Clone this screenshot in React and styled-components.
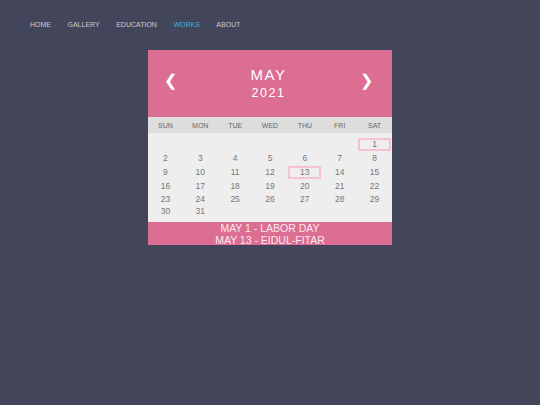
import styled, { createGlobalStyle } from 'styled-components';

const GlobalStyle = createGlobalStyle`
  * { box-sizing: border-box; }
  body {
    margin: 0;
    background: #43465a;
    font-family: "Liberation Sans", Arial, sans-serif;
  }
`;

const navItems = ['HOME', 'GALLERY', 'EDUCATION', 'WORKS', 'ABOUT'];
const weekdays = ['SUN', 'MON', 'TUE', 'WED', 'THU', 'FRI', 'SAT'];
const highlighted = [1, 13];

const days = [
  ...Array(6).fill(null),
  ...Array.from({ length: 31 }, (_, i) => i + 1),
];

function App() {
  return (
    <Page>
      <GlobalStyle />
      <Nav>
        {navItems.map((item) => (
          <NavLink key={item} $active={item === 'WORKS'}>{item}</NavLink>
        ))}
      </Nav>
      <Calendar>
        <Header>
          <Arrow>&#10094;</Arrow>
          <MonthYear>
            <Month>MAY</Month>
            <Year>2021</Year>
          </MonthYear>
          <Arrow>&#10095;</Arrow>
        </Header>
        <Weekdays>
          {weekdays.map((d) => <Weekday key={d}>{d}</Weekday>)}
        </Weekdays>
        <Days>
          {days.map((d, i) => (
            <Day key={i}>
              {d && (highlighted.includes(d)
                ? <Active>{d}</Active>
                : d)}
            </Day>
          ))}
        </Days>
        <Footer>
          <div>MAY 1 - LABOR DAY</div>
          <div>MAY 13 - EIDUL-FITAR</div>
        </Footer>
      </Calendar>
    </Page>
  );
}

export default App;

const Page = styled.div`
  width: 540px;
  min-height: 405px;
  padding-top: 20px;
`;

const Nav = styled.nav`
  display: flex;
  gap: 16.5px;
  padding-left: 30px;
  height: 30px;
`;

const NavLink = styled.a`
  font-size: 7px;
  line-height: 9px;
  color: ${(p) => (p.$active ? '#3cb4dc' : '#c9cad2')};
  cursor: pointer;
`;

const Calendar = styled.div`
  width: 244px;
  margin-left: 148px;
`;

const Header = styled.div`
  background: #dc6e93;
  height: 67px;
  display: flex;
  align-items: center;
  justify-content: space-between;
  padding: 0 19px 0 16px;
  color: #fff;
`;

const Arrow = styled.span`
  font-size: 16px;
  line-height: 16px;
  margin-top: -6px;
`;

const MonthYear = styled.div`
  text-align: center;
  margin-top: -1px;
`;

const Month = styled.div`
  font-size: 15px;
  letter-spacing: 1.5px;
  line-height: 17px;
`;

const Year = styled.div`
  font-size: 12.5px;
  letter-spacing: 1.5px;
  line-height: 16px;
  margin-top: 2px;
`;

const Weekdays = styled.ul`
  list-style: none;
  margin: 0;
  padding: 0;
  display: grid;
  grid-template-columns: repeat(7, 1fr);
  background: #dddddd;
  height: 16px;
  align-items: center;
`;

const Weekday = styled.li`
  font-size: 7px;
  color: #666;
  text-align: center;
`;

const Days = styled.ul`
  list-style: none;
  margin: 0;
  padding: 4px 0 5px;
  display: grid;
  grid-template-columns: repeat(7, 1fr);
  grid-template-rows: 14px 14px 14px 14px 12px 12px;
  background: #eeeeee;
`;

const Day = styled.li`
  font-size: 8.5px;
  line-height: 12px;
  color: #777;
  text-align: center;
  display: flex;
  align-items: center;
  justify-content: center;
`;

const Active = styled.span`
  display: block;
  width: 33px;
  height: 13px;
  line-height: 9px;
  border: 2px solid #f7c2cf;
`;

const Footer = styled.div`
  background: #dc6e93;
  color: #fbe9ef;
  text-align: center;
  font-size: 10.5px;
  line-height: 12px;
  padding-top: 0;
  height: 23px;
`;
